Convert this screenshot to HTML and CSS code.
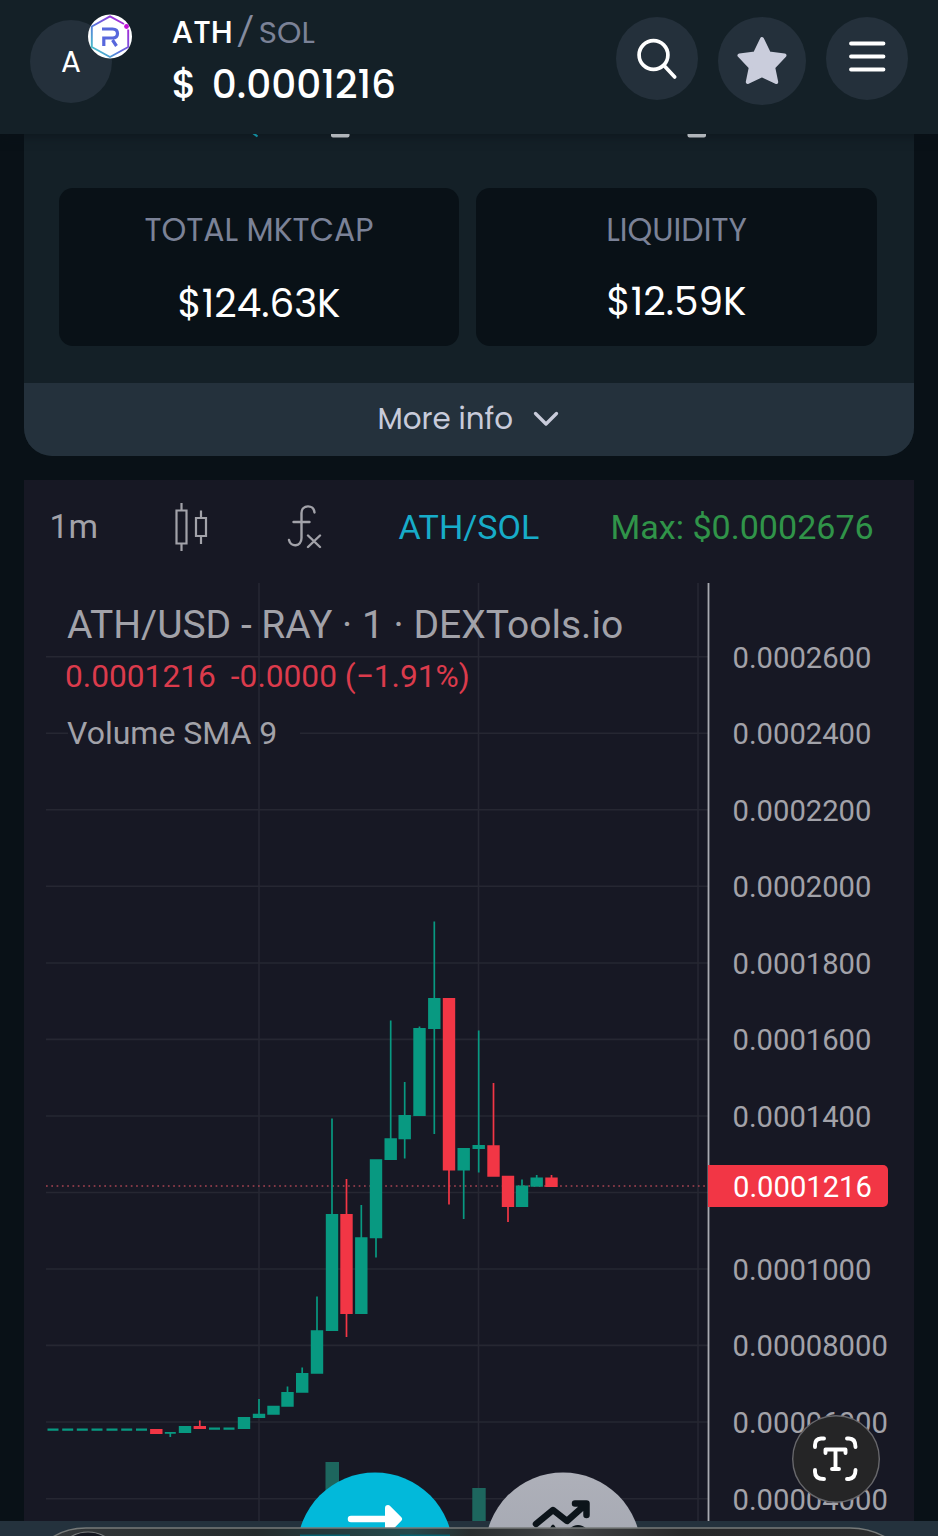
FILE: index.html
```html
<!DOCTYPE html>
<html lang="en">
<head>
<meta charset="utf-8">
<title>ATH/SOL</title>
<link rel="stylesheet" href="styles.css">
</head>
<body>
<header class="topbar">
  <div class="token">A
    <svg class="badge" viewBox="0 0 44 44">
      <defs><linearGradient id="ray" x1="0" y1="1" x2="1" y2="0"><stop offset="0" stop-color="#41d8c5"/><stop offset=".45" stop-color="#5a6fdc"/><stop offset="1" stop-color="#c210d6"/></linearGradient></defs>
      <circle cx="22" cy="22" r="22" fill="#fff"/>
      <path d="M36 9.5 22 1.8 3.8 12v20.5L22 42.5l18.2-10V15" fill="none" stroke="url(#ray)" stroke-width="1.9"/>
      <circle cx="38.5" cy="12" r="2.4" fill="#c210d6"/>
      <path d="M14 14.500H24.500Q29.500 14.500 29.500 19T24.500 23.500H15.800V31.500M24.500 25.500 28.500 31.500" fill="none" stroke="#5767dc" stroke-width="3.200"/>
    </svg>
  </div>
  <div class="quote">
    <div class="pair"><b>ATH</b><i>/</i><span>SOL</span></div>
    <div class="price"><span>$</span><span>0.0001216</span></div>
  </div>
  <nav class="actions">
    <button class="round"><svg width="82" height="84" viewBox="0 0 82 84"><g fill="none" stroke="#fff" stroke-width="3.700" stroke-linecap="round"><circle cx="37.500" cy="38" r="14.400"/><path d="M48 48.500 58.700 60"/></g></svg></button>
    <button class="round star"><svg width="88" height="88" viewBox="0 0 88 88"><path d="M44 22 51 36.500 66.500 38.500 55.200 50.500 58.200 65 44 58.300 29.800 65 32.800 50.500 21.500 38.500 37 36.500Z" fill="#cacddc" stroke="#cacddc" stroke-width="4" stroke-linejoin="round"/></svg></button>
    <button class="round"><svg width="82" height="84" viewBox="0 0 82 84"><path d="M25 26.500H57.500M25 39.500H57.500M25 52.500H57.500" stroke="#fff" stroke-width="3.800" stroke-linecap="round"/></svg></button>
  </nav>
</header>

<main class="page">
  <section class="card">
    <svg class="clipped" viewBox="24 134 889 6"><path d="M253 133 257.500 136.500" stroke="#128a9c" stroke-width="2.200"/><rect x="331" y="132" width="18.500" height="5.500" rx="2" fill="#b0b5ba"/><rect x="687.500" y="132" width="18.500" height="5.500" rx="2" fill="#b0b5ba"/></svg>
    <div class="stats">
      <div class="stat"><span class="label">TOTAL MKTCAP</span><strong>$124.63K</strong></div>
      <div class="stat liq"><span class="label">LIQUIDITY</span><strong>$12.59K</strong></div>
    </div>
    <button class="more"><span>More info</span><svg width="28" height="18" viewBox="0 0 28 18"><path d="M3.500 3.500 14 14 24.500 3.500" fill="none" stroke="#c8cbda" stroke-width="3.300" stroke-linecap="round" stroke-linejoin="round"/></svg></button>
  </section>

  <section class="panel">
    <div class="tools">
      <span class="interval">1m</span>
      <svg class="candle-icon" width="36" height="52" viewBox="0 0 36 52"><path d="M3.500 9.500H13.500V42.500H3.500ZM8.500 2V9M8.500 43V50M23 17H33V35H23ZM28 9.500V17M28 35V43" fill="none" stroke="#a2a2a9" stroke-width="2.200"/></svg>
      <svg class="fx-icon" width="36" height="46" viewBox="0 0 36 46"><path d="M27.500 8.500C27 0 14.500 .5 14.500 9V34C14.500 43 3.500 43.500 2 36M6.500 18H22.500M21 31.500 33 43M33 31.500 21 43" fill="none" stroke="#a2a2a9" stroke-width="2.400" stroke-linecap="round"/></svg>
      <span class="symbol">ATH/SOL</span>
      <span class="max">Max: $0.0002676</span>
    </div>
    <div class="chart">
      <svg class="plot" viewBox="24 583 889 938">
        <path class="grid" d="M46 656.700H708M46 733.300H68M300 733.300H708M46 809.800H708M46 886.300H708M46 963H708M46 1039.400H708M46 1116H708M46 1192.500H708M46 1269H708M46 1345.400H708M46 1422H708M46 1498.700H708M259 583V1521M478.500 583V1521M698 583V1521"/>
        <path class="axis-line" d="M708.500 583V1521"/>
        <g class="volume"><path d="M325.500 1462H339V1521H325.500ZM472.300 1488H485.700V1521H472.300Z"/></g>
        <path class="last" d="M46 1186H708"/>
        <g id="candles"></g>
      </svg>
      <div class="legend">
        <h1>ATH/USD - RAY · 1 · DEXTools.io</h1>
        <p class="change"><span>0.0001216</span><span>-0.0000 (−1.91%)</span></p>
        <p class="study">Volume SMA 9</p>
      </div>
      <ol class="scale">
        <li>0.0002600</li><li>0.0002400</li><li>0.0002200</li><li>0.0002000</li><li>0.0001800</li><li>0.0001600</li><li>0.0001400</li>
        <li><mark>0.0001216</mark></li>
        <li>0.0001000</li><li>0.00008000</li><li>0.00006000</li><li>0.00004000</li>
      </ol>
    </div>
  </section>
</main>

<svg class="dock" viewBox="0 1410 938 126">
  <defs>
    <linearGradient id="silver" x1="0" y1="0" x2="0" y2="1"><stop offset="0" stop-color="#aeb0b9"/><stop offset="1" stop-color="#9ca1ac"/></linearGradient>
    <linearGradient id="tray"><stop offset="0" stop-color="#34383a"/><stop offset=".25" stop-color="#252b2c"/><stop offset=".43" stop-color="#254a4c"/><stop offset=".5" stop-color="#292d2e"/><stop offset=".61" stop-color="#414345"/><stop offset=".75" stop-color="#272829"/><stop offset="1" stop-color="#2c2d2e"/></linearGradient>
  </defs>
  <rect y="1521" width="938" height="15" fill="#24323d"/>
  <circle cx="375" cy="1550.500" r="78" fill="#02b9da"/>
  <path d="M351 1519H388" stroke="#fff" stroke-width="6.500" stroke-linecap="round"/><path d="M388 1508 399 1519 388 1530Z" fill="#fff" stroke="#fff" stroke-width="6" stroke-linejoin="round"/>
  <circle cx="563" cy="1550.500" r="78" fill="url(#silver)"/>
  <path d="M536 1524 553 1510 567 1521 585 1505M575 1503.500H586.500V1515" fill="none" stroke="#0c141a" stroke-width="6.500" stroke-linecap="round" stroke-linejoin="round"/>
  <path d="M569 1529Q578 1521 587 1529ZM550 1528Q553 1521 556 1528Z" fill="#0c141a"/>
  <path d="M42 1546Q59 1528 86 1528H850Q877 1528 898 1546Z" fill="url(#tray)" stroke="#757978" stroke-width="1.500"/>
  <path d="M300 1535.500H350M400 1535.500H450" stroke="#07606f" stroke-width="2"/>
  <circle cx="88" cy="1565" r="33" fill="#13161f" stroke="#777b7c" stroke-width="1.200"/>
  <circle cx="836" cy="1459" r="43.300" fill="#252526" stroke="#67676b" stroke-width="1.400"/>
  <g fill="none" stroke="#fff" stroke-width="3.900" stroke-linecap="round" stroke-linejoin="round"><path d="M815 1447V1445Q815 1439 821 1438.500H824M847 1438.500H849Q855.500 1438.500 855.500 1447M815 1470V1472Q815 1479 824 1479M847 1479H849Q855.500 1478 855.500 1470"/><path d="M825.500 1453V1449.500H845.500V1453M835.500 1450V1469M832 1469H839"/></g>
</svg>
<script src="chart.js"></script>
</body>
</html>
```
FILE: styles.css
```css
* { box-sizing: border-box; }
body { margin: 0; width: 938px; height: 1536px; overflow: hidden; position: relative; background: #091117; color: #fff; font-family: Poppins, Lato, sans-serif; }
button { border: 0; padding: 0; font: inherit; color: inherit; }
svg { display: block; flex: none; }

.topbar { position: relative; z-index: 2; height: 134px; display: flex; background: #142027; padding: 17px 30px 0 30px; box-shadow: 0 2px 10px #0a101899; }
.token { position: relative; width: 82px; height: 83px; margin-top: 3px; border-radius: 50%; background: #24303b; font-size: 29.500px; line-height: 83px; text-align: center; }
.badge { position: absolute; left: 58px; top: -6px; width: 44px; height: 45px; }
.quote { margin-left: 59.500px; width: 300px; }
.pair { display: flex; height: 34px; align-items: center; margin-top: -2px; font-size: 31.200px; line-height: 34px; }
.pair b { font-weight: 500; }
.pair i { font: normal 40px/34px Lato, sans-serif; color: #848b9f; width: 11px; display: flex; justify-content: center; margin: -5px 8px 0 7px; }
.pair span { color: #7b8297; font-size: 31px; }
.price { display: flex; gap: 15px; margin-top: 11px; font-weight: 500; font-size: 39px; line-height: 50px; }
.actions { display: flex; margin-left: auto; gap: 20px; }
.round { width: 82px; height: 83px; border-radius: 50%; background: #24303b; }
.round.star { width: 88px; height: 88px; }

.page { padding: 0 24.500px 0 24px; }
.card { background: #142027; border-radius: 0 0 28px 28px; overflow: hidden; height: 322px; }
.clipped { width: 889px; height: 6px; position: relative; z-index: 3; }
.stats { display: grid; grid-template-columns: 400px 401px; gap: 17px; padding: 48px 35px 37px; }
.stat { height: 158px; background: #091117; border-radius: 14px; display: flex; flex-direction: column; align-items: center; padding-top: 22px; }
.label { font-size: 31.500px; line-height: 40px; color: #7b8297; }
.stat strong { margin-top: 29px; font-weight: 400; font-size: 39px; line-height: 50px; }
.stat.liq strong { margin-top: 27px; }
.more { width: 100%; height: 73px; background: #24313c; color: #c8cbda; display: flex; align-items: center; justify-content: center; gap: 19px; padding-bottom: 2px; font-size: 29.400px; }

.panel { margin-top: 24px; height: 1041px; background: #171824; color: #a2a2a9; font-family: Roboto, sans-serif; }
.tools { height: 103px; display: flex; align-items: center; padding: 0 0 10px 25.500px; font-size: 34.100px; }
.interval { width: 123.500px; font-size: 33.700px; }
.candle-icon { margin-right: 77.500px; }
.fx-icon { margin-right: 76px; }
.symbol { color: #17acc9; width: 212px; }
.max { color: #309449; }
.chart { position: relative; height: 938px; }
.plot { position: absolute; inset: 0; width: 889px; height: 938px; }
.grid { fill: none; stroke: #262732; stroke-width: 1.600; }
.axis-line { stroke: #a9aab1; stroke-width: 1.800; }
.last { stroke: #a74351; stroke-width: 1.700; stroke-dasharray: 1.700 3.600; }
.volume { fill: #1d665e; }
.up { fill: #089981; }
.down { fill: #f23645; }
.legend { position: absolute; left: 43px; top: 18px; white-space: nowrap; }
.legend h1 { margin: 0; font-weight: 400; font-size: 39px; line-height: 48px; }
.change { display: flex; gap: 15px; margin: 5px 0 0 -2px; font-size: 31.700px; line-height: 46px; color: #db3b4c; }
.study { margin: 10px 0 0; font-size: 32px; line-height: 46px; }
.scale { position: absolute; left: 708.500px; top: 36.500px; margin: 0; padding: 0; list-style: none; font-size: 29.200px; }
.scale li { height: 76.550px; line-height: 76.550px; position: relative; }
.scale mark { position: absolute; left: -24.500px; top: 9.500px; width: 180px; height: 42px; padding-left: 25px; border-radius: 0 5px 5px 0; background: #f23645; color: #fff; line-height: 44px; }
.dock { position: absolute; z-index: 3; left: 0; bottom: 0; width: 938px; height: 126px; }
```
FILE: chart.js
```js
// [center x, high, body top, body bottom, low, direction]
const candles = [
  ...[53, 67.700, 82.300, 97, 112, 126.700, 141.500].map(x => [x, 1428.400, 1428.400, 1430.700, 1430.700, 'up']),
  [156.300, 1429, 1429, 1434, 1434, 'down'], [170.300, 1432, 1432, 1433.700, 1437, 'up'],
  [185, 1426, 1426, 1433, 1433, 'up'], [199.800, 1420.500, 1426, 1429, 1429, 'down'],
  [214.500, 1427.500, 1427.500, 1429.800, 1429.800, 'up'], [229, 1427.500, 1427.500, 1429.800, 1429.800, 'up'],
  [244, 1417, 1417, 1429, 1429, 'up'], [259, 1399, 1413.700, 1418, 1418, 'up'],
  [273.500, 1405.700, 1405.700, 1414.700, 1414.700, 'up'], [287.500, 1386.500, 1392, 1406.700, 1406.700, 'up'],
  [302.200, 1367.500, 1373, 1392.700, 1392.700, 'up'], [317, 1296.500, 1330.300, 1373.700, 1373.700, 'up'],
  [332, 1118.500, 1214, 1331, 1331, 'up'], [346.500, 1179, 1214, 1314, 1337, 'down'],
  [361.300, 1205, 1237.300, 1314, 1314, 'up'], [376, 1159.300, 1159.300, 1238.300, 1257.500, 'up'],
  [390.700, 1020.500, 1138.300, 1160, 1160, 'up'], [404.700, 1082, 1115, 1139.300, 1158.500, 'up'],
  [419.500, 1026.500, 1028, 1116, 1116, 'up'], [434.300, 921.500, 998, 1029, 1134, 'up'],
  [449, 998, 998, 1170.500, 1204.500, 'down'], [463.700, 1148, 1148, 1170.500, 1219, 'up'],
  [478.700, 1030.500, 1145, 1149, 1172.500, 'up'], [493.500, 1083, 1145.300, 1176.700, 1176.700, 'down'],
  [508, 1175.700, 1175.700, 1207, 1222, 'down'], [522, 1179.500, 1185.500, 1207, 1207, 'up'],
  [536.700, 1175, 1177.500, 1186.700, 1186.700, 'up'], [551.500, 1175, 1177.500, 1187, 1187, 'down']
];
const layer = document.getElementById('candles');
for (const [x, high, top, bottom, low, dir] of candles) {
  const path = document.createElementNS('http://www.w3.org/2000/svg', 'path');
  const half = bottom - top < 2.4 ? 5.5 : 6.2;
  path.setAttribute('class', dir);
  path.setAttribute('d', `M${x - half} ${top}H${x + half}V${bottom}H${x - half}ZM${x - 0.85} ${high}H${x + 0.85}V${low}H${x - 0.85}Z`);
  layer.append(path);
}
```
